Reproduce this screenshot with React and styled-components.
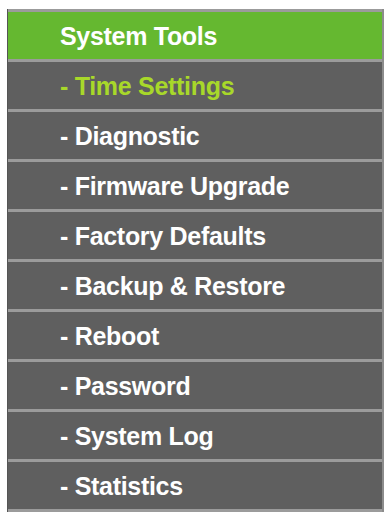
import React from "react";
import styled, { createGlobalStyle } from "styled-components";

const Global = createGlobalStyle`
  html, body { margin: 0; padding: 0; background: #ffffff; }
  body { font-family: "Liberation Sans", Arial, sans-serif; }
`;

const Page = styled.div`
  padding: 9px 0 0 7px;
`;

const Menu = styled.nav`
  width: 374px;
  display: flex;
  flex-direction: column;
  background: #9b9b9b;
  border-left: 1px solid #555;
  border-right: 2px solid #8c8c8c;
  padding-bottom: 3px;
`;

const Row = styled.div`
  margin-top: 3px;
  height: 47px;
  box-sizing: border-box;
  padding-top: 2px;
  display: flex;
  align-items: center;
  padding-left: 52px;
  background: ${(p) => (p.$header ? "#65b830" : "#5f5f5f")};
  color: ${(p) => (p.$active ? "#a8d82a" : "#ffffff")};
  font-family: "Liberation Sans", Arial, sans-serif;
  font-weight: bold;
  font-size: 25px;
  letter-spacing: -0.3px;
  white-space: nowrap;
`;

const items = [
  "Time Settings",
  "Diagnostic",
  "Firmware Upgrade",
  "Factory Defaults",
  "Backup & Restore",
  "Reboot",
  "Password",
  "System Log",
  "Statistics",
];

export default function App() {
  return (
    <>
      <Global />
      <Page>
        <Menu>
          <Row $header>System Tools</Row>
          {items.map((t, i) => (
            <Row key={t} $active={i === 0}>
              - {t}
            </Row>
          ))}
        </Menu>
      </Page>
    </>
  );
}
